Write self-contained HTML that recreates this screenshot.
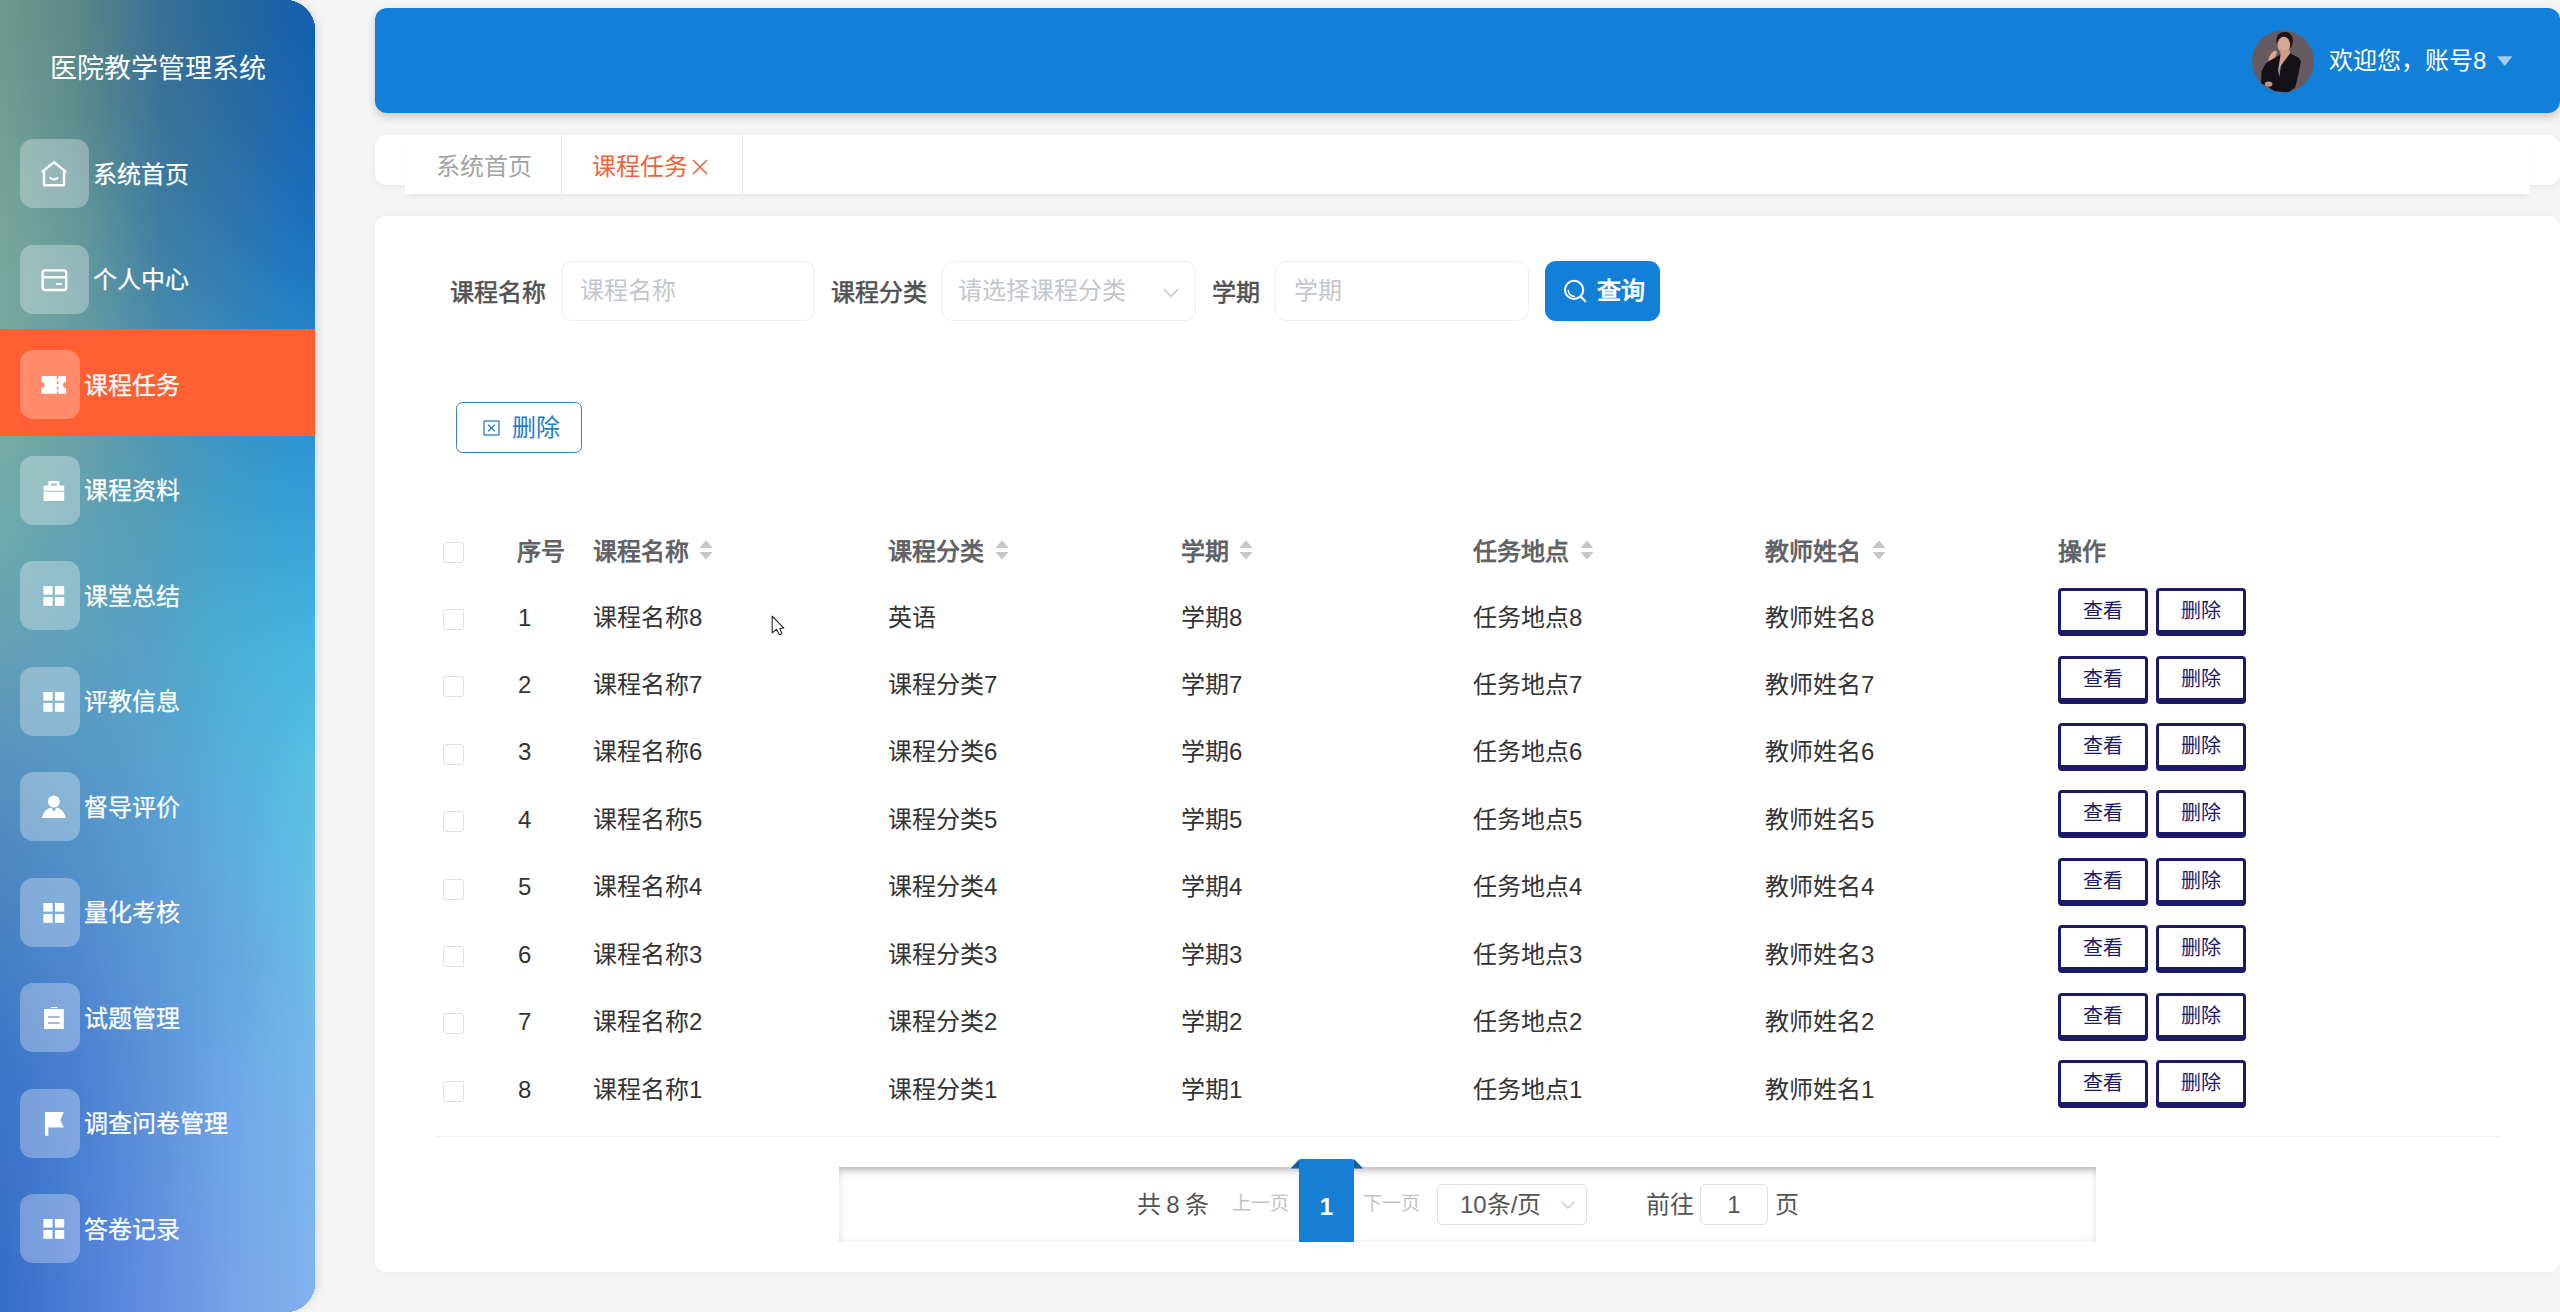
<!DOCTYPE html>
<html lang="zh-CN">
<head>
<meta charset="utf-8">
<title>课程任务</title>
<style>
*{box-sizing:border-box;margin:0;padding:0}
html,body{width:2560px;height:1312px;overflow:hidden;background:#f5f5f5;font-family:"Liberation Sans",sans-serif;}
body{position:relative}
.a{position:absolute;white-space:nowrap}
.t{position:absolute;white-space:nowrap;line-height:1;transform:translateY(-50%)}
/* sidebar */
#sb{left:0;top:0;width:315px;height:1312px;border-radius:0 30px 30px 0;overflow:hidden;box-shadow:3px 0 8px rgba(0,0,0,.10)}
#title{left:0;width:315px;text-align:center;top:68px;font-size:27px;color:#fff}
.ib{position:absolute;left:20px;height:69px;border-radius:13px;background:rgba(255,255,255,.30)}
.mt{font-size:24px;color:#fff;-webkit-text-stroke:.25px #fff}
#act{left:0;top:329px;width:315px;height:107px;background:#ff5f32}
/* header */
#hd{left:375px;top:8px;width:2185px;height:105px;background:#1280d8;border-radius:12px;box-shadow:0 4px 9px rgba(60,50,20,.22)}
/* tabs */
#tbo{left:375px;top:135px;width:2185px;height:50px;background:#fff;border-radius:12px;box-shadow:0 2px 6px rgba(0,0,0,.06)}
#tbi{left:405px;top:135px;width:2125px;height:59px;background:#fff;box-shadow:0 5px 6px -3px rgba(0,0,0,.07)}
.tsep{position:absolute;top:135px;width:1px;height:59px;background:#e6e8ee}
/* card */
#card{left:375px;top:216px;width:2185px;height:1056px;background:#fff;border-radius:12px;box-shadow:0 0 8px rgba(0,0,0,.03)}
.lab{font-size:24px;color:#505050;font-weight:normal;-webkit-text-stroke:.55px #505050}
.inp{position:absolute;top:261px;width:254px;height:60px;border:1px solid #edeef2;border-radius:11px;background:#fff}
.ph{font-size:24px;color:#c3c6ce}
.th{font-size:24px;color:#626366;font-weight:bold}
.td{font-size:24px;color:#333}
.cb{position:absolute;left:443px;width:21px;height:21px;border:1px solid #dfe0e4;border-radius:3px;background:#fff}
.btn{position:absolute;width:90px;height:48px;border:3px solid #1c1968;border-bottom-width:6px;border-radius:4px;background:#fff;color:#1c1968;font-size:20px;text-align:center;line-height:40px}
.srt{position:absolute;width:14px;height:20px}
.sbl{position:absolute;left:0;top:0;width:315px;height:1312px}
#sbL{background:linear-gradient(to bottom,#6e9a8c 17px,#72a092 115px,#78a89a 227px,#76aca6 446px,#6faaae 543px,#66a0b4 649px,#5a93be 755px,#4d88c0 859px,#437ec4 965px,#3c75c6 1073px,#366dc8 1290px)}
#sbQ1{background:linear-gradient(to bottom,#5a8888 17px,#5c8c8e 115px,#64989a 227px,#68a2aa 446px,#60a2b6 543px,#5ea0bc 649px,#5798c6 755px,#5290c8 859px,#5088d0 965px,#4a80d0 1073px,#4c7ed6 1290px);-webkit-mask-image:linear-gradient(to right,rgba(0,0,0,0) 0%,#000 25%);mask-image:linear-gradient(to right,rgba(0,0,0,0) 0%,#000 25%)}
#sbM{background:linear-gradient(to bottom,#3b7094 17px,#3d7496 115px,#3f7ea2 227px,#4f98b4 446px,#52a0bc 543px,#54a2c8 649px,#57a3ce 755px,#5b9cd4 859px,#5c98d8 965px,#5c94d8 1073px,#6690e0 1290px);-webkit-mask-image:linear-gradient(to right,rgba(0,0,0,0) 25%,#000 50%);mask-image:linear-gradient(to right,rgba(0,0,0,0) 25%,#000 50%)}
#sbQ3{background:linear-gradient(to bottom,#22689e 17px,#2a6ca4 115px,#2d76b0 227px,#3a96c8 446px,#42a2d0 543px,#4cb0d6 649px,#56b0da 755px,#5eaee0 859px,#64a8e2 965px,#6ea8ea 1073px,#78a4ea 1290px);-webkit-mask-image:linear-gradient(to right,rgba(0,0,0,0) 50%,#000 75%);mask-image:linear-gradient(to right,rgba(0,0,0,0) 50%,#000 75%)}
#sbR{background:linear-gradient(to bottom,#1560b0 17px,#1766b4 115px,#1a70c0 227px,#2a96d4 446px,#38a5dc 543px,#46b6e2 649px,#55bfe4 755px,#62c0e6 859px,#6cbce8 965px,#76b8ea 1073px,#82b2ee 1290px);-webkit-mask-image:linear-gradient(to right,rgba(0,0,0,0) 75%,#000 100%);mask-image:linear-gradient(to right,rgba(0,0,0,0) 75%,#000 100%)}
</style>
</head>
<body>
<div id="sb" class="a"><div id="sbL" class="sbl"></div><div id="sbQ1" class="sbl"></div><div id="sbM" class="sbl"></div><div id="sbQ3" class="sbl"></div><div id="sbR" class="sbl"></div>
<div id="act" class="a"></div>
<div class="t " style="left:0px;top:69px;width:315px;text-align:center;font-size:27px;color:#fff">医院教学管理系统</div>
<div class="ib" style="top:139.0px;width:69px;"><svg class="a" style="left:19px;top:20px" width="30" height="30" viewBox="0 0 30 30" fill="none" stroke="#fff" stroke-width="2.4" stroke-linejoin="round" stroke-linecap="round"><path d="M3.4 12.6 L15 3.2 L26.6 12.6 M5 11.6 V26.2 H25 V11.6"/><path d="M11.4 19 Q15 22 18.6 19" stroke-width="2.2"/></svg></div>
<div class="t mt" style="left:93px;top:174.5px;">系统首页</div>
<div class="ib" style="top:244.5px;width:69px;"><svg class="a" style="left:20px;top:20px" width="30" height="30" viewBox="0 0 30 30" fill="none" stroke="#fff" stroke-width="2.4" stroke-linejoin="round"><rect x="2.6" y="5.4" width="23.6" height="19.6" rx="2.4"/><path d="M2.6 12.2 H26.2"/><path d="M16.2 19 H22" stroke-width="2"/></svg></div>
<div class="t mt" style="left:93px;top:280.0px;">个人中心</div>
<div class="ib" style="top:350.0px;width:60px;background:rgba(255,255,255,.28);"><svg class="a" style="left:20px;top:25px" width="28" height="20" viewBox="0 0 28 20"><path fill="#fff" d="M1.5 1 H26 V7 A3 3 0 0 0 26 13 V18.8 H1.5 V13 A3 3 0 0 0 1.5 7 Z"/><path d="M17.6 1 V18.8" stroke="#ff8c6e" stroke-width="1.6" stroke-dasharray="3 2.2"/></svg></div>
<div class="t mt" style="left:84px;top:385.5px;">课程任务</div>
<div class="ib" style="top:455.5px;width:60px;"><svg class="a" style="left:22px;top:23px" width="24" height="24" viewBox="0 0 24 24"><path fill="#fff" d="M6.4 6.5 V2 H17.4 V6.5 H22.2 V22 H1.6 V6.5 Z M9 6.5 H14.8 V4.4 H9 Z"/><path d="M1.6 12.3 H22.2" stroke="#9cc3cc" stroke-width="1"/></svg></div>
<div class="t mt" style="left:84px;top:491.0px;">课程资料</div>
<div class="ib" style="top:561.0px;width:60px;"><svg class="a" style="left:23px;top:24px" width="22" height="22" viewBox="0 0 22 22" fill="#fff"><rect x="0.4" y="1" width="9.2" height="8.6"/><rect x="12" y="1" width="9.2" height="8.6"/><rect x="0.4" y="12" width="9.2" height="8.8"/><rect x="12" y="12" width="9.2" height="8.8"/></svg></div>
<div class="t mt" style="left:84px;top:596.5px;">课堂总结</div>
<div class="ib" style="top:666.5px;width:60px;"><svg class="a" style="left:23px;top:24px" width="22" height="22" viewBox="0 0 22 22" fill="#fff"><rect x="0.4" y="1" width="9.2" height="8.6"/><rect x="12" y="1" width="9.2" height="8.6"/><rect x="0.4" y="12" width="9.2" height="8.8"/><rect x="12" y="12" width="9.2" height="8.8"/></svg></div>
<div class="t mt" style="left:84px;top:702.0px;">评教信息</div>
<div class="ib" style="top:772.0px;width:60px;"><svg class="a" style="left:21px;top:22px" width="26" height="26" viewBox="0 0 26 26" fill="#fff"><circle cx="12.9" cy="7.5" r="5.9"/><path d="M0.9 24 C2.4 17.5 6.4 14.4 10.2 13.6 L12.9 17.8 L15.6 13.6 C19.4 14.4 23.4 17.5 24.9 24 Z"/></svg></div>
<div class="t mt" style="left:84px;top:807.5px;">督导评价</div>
<div class="ib" style="top:877.5px;width:60px;"><svg class="a" style="left:23px;top:24px" width="22" height="22" viewBox="0 0 22 22" fill="#fff"><rect x="0.4" y="1" width="9.2" height="8.6"/><rect x="12" y="1" width="9.2" height="8.6"/><rect x="0.4" y="12" width="9.2" height="8.8"/><rect x="12" y="12" width="9.2" height="8.8"/></svg></div>
<div class="t mt" style="left:84px;top:913.0px;">量化考核</div>
<div class="ib" style="top:983.0px;width:60px;"><svg class="a" style="left:23px;top:23px" width="22" height="24" viewBox="0 0 22 24"><path fill="#fff" d="M1.1 3 H7 L8 1 H14 L15 3 H20.8 V23 H1.1 Z"/><path d="M7.4 2.6 H14.6" stroke="#88a8dc" stroke-width="1"/><path d="M5 11 H16.8 M5 17 H16.8" stroke="#8fa0d8" stroke-width="1.3"/></svg></div>
<div class="t mt" style="left:84px;top:1018.5px;">试题管理</div>
<div class="ib" style="top:1088.5px;width:60px;"><svg class="a" style="left:24px;top:22px" width="22" height="26" viewBox="0 0 22 26" fill="#fff"><path d="M1 1 H19.8 L16.4 9.3 L19.8 16.5 H4.4 V24.7 H1 Z"/></svg></div>
<div class="t mt" style="left:84px;top:1124.0px;">调查问卷管理</div>
<div class="ib" style="top:1194.0px;width:60px;"><svg class="a" style="left:23px;top:24px" width="22" height="22" viewBox="0 0 22 22" fill="#fff"><rect x="0.4" y="1" width="9.2" height="8.6"/><rect x="12" y="1" width="9.2" height="8.6"/><rect x="0.4" y="12" width="9.2" height="8.8"/><rect x="12" y="12" width="9.2" height="8.8"/></svg></div>
<div class="t mt" style="left:84px;top:1229.5px;">答卷记录</div>
</div>
<div id="hd" class="a"></div>
<svg class="a" style="left:2250.7px;top:28.5px" width="64" height="64" viewBox="-1 -1 64 64">
<defs><clipPath id="av"><circle cx="31" cy="31.5" r="31"/></clipPath></defs>
<g clip-path="url(#av)">
<rect x="-1" y="-1" width="64" height="64" fill="#675a61"/>
<path d="M24.6 13 C23.6 5.5 27.5 1.8 32.5 1.9 C38.5 2 42 6.5 40.6 13.5 C40 16 39 17.5 38.2 18 L26 17 Z" fill="#1e1519"/>
<ellipse cx="31.8" cy="14.8" rx="6.4" ry="8" fill="#d8a792"/>
<path d="M28.4 20 L37.6 20 L38.2 24.5 L26.6 39.5 L28.2 25 Z" fill="#d09a84"/>
<path d="M16.3 33.5 L16.8 28 L19.5 23 L22.6 20.4 L25.2 22 L23.6 26.2 L22.2 29.2 L21.8 34 Z" fill="#d8a792"/>
<path d="M13.2 34 L17 31 L24 27.2 L28.6 24.6 L26 39.5 L38.2 23.2 L47 28 L49 31.5 L46.2 45 L43.2 57.5 L36 62.5 L22 61 L16 56.5 L9.2 53.5 L9.4 42 Z" fill="#141218"/>
<path d="M26 39.5 L29.6 31 L27.4 47 Z" fill="#cfc6c4" opacity=".7"/>
<ellipse cx="16.6" cy="54" rx="3.8" ry="2.6" fill="#c9947e"/>
</g></svg>
<div class="t " style="left:2329px;top:61px;font-size:24px;color:#fff">欢迎您，账号8</div>
<svg class="a" style="left:2496px;top:55px" width="18" height="12" viewBox="0 0 18 12"><path d="M1 1.2 H16.4 L8.7 11 Z" fill="#a5cdf3"/></svg>
<div id="tbo" class="a"></div><div id="tbi" class="a"></div>
<div class="tsep" style="left:561px"></div><div class="tsep" style="left:742px"></div>
<div class="t " style="left:436px;top:167px;font-size:24px;color:#a4a4a4">系统首页</div>
<div class="t " style="left:592px;top:167px;font-size:24px;color:#f0623a">课程任务</div>
<svg class="a" style="left:691px;top:158px" width="18" height="18" viewBox="0 0 18 18"><path d="M2 2 L16 16 M16 2 L2 16" stroke="#f0623a" stroke-width="1.6" fill="none"/></svg>
<div id="card" class="a"></div>
<div class="t lab" style="left:450px;top:293px;">课程名称</div>
<div class="inp" style="left:561px"></div>
<div class="t ph" style="left:580px;top:291px;">课程名称</div>
<div class="t lab" style="left:831px;top:293px;">课程分类</div>
<div class="inp" style="left:942px"></div>
<div class="t ph" style="left:958px;top:291px;">请选择课程分类</div>
<svg class="a" style="left:1162px;top:287px" width="18" height="12" viewBox="0 0 18 12"><path d="M2 2 L9 9.4 L16 2" stroke="#c3c6ce" stroke-width="1.5" fill="none"/></svg>
<div class="t lab" style="left:1212px;top:293px;">学期</div>
<div class="inp" style="left:1275px"></div>
<div class="t ph" style="left:1294px;top:291px;">学期</div>
<div class="a" style="left:1545px;top:261px;width:115px;height:60px;background:#1280d8;border-radius:11px"></div>
<svg class="a" style="left:1560px;top:275px" width="30" height="30" viewBox="0 0 30 30" fill="none" stroke="#fff" stroke-linecap="round"><circle cx="14.1" cy="14.9" r="9.1" stroke-width="2.1"/><path d="M20.7 21.5 L25.2 26.2" stroke-width="2.1"/><path d="M8.3 15.4 A6.2 6.2 0 0 0 14.4 21.4" stroke-width="1.5"/></svg>
<div class="t " style="left:1597px;top:291px;font-size:24px;color:#fff;font-weight:bold">查询</div>
<div class="a" style="left:456px;top:402px;width:126px;height:51px;border:1px solid #3b80ba;border-radius:6.5px;background:#fff"></div>
<svg class="a" style="left:483px;top:420px" width="17" height="16" viewBox="0 0 17 16" fill="none" stroke="#2b82c4" stroke-width="1.3"><rect x="1" y="1" width="15" height="14"/><path d="M5.2 4.8 L11.8 11.2 M11.8 4.8 L5.2 11.2"/></svg>
<div class="t " style="left:512px;top:428px;font-size:24px;color:#1b7cc8">删除</div>
<div class="cb" style="top:542.3px"></div>
<div class="t th" style="left:517px;top:552px;">序号</div>
<div class="t th" style="left:593px;top:552px;">课程名称</div>
<svg class="srt" style="left:699px;top:540px" viewBox="0 0 14 20"><path d="M0.4 8 L7 0.6 L13.6 8 Z M0.4 12 L7 19.4 L13.6 12 Z" fill="#c4c6ca"/></svg>
<div class="t th" style="left:888px;top:552px;">课程分类</div>
<svg class="srt" style="left:995px;top:540px" viewBox="0 0 14 20"><path d="M0.4 8 L7 0.6 L13.6 8 Z M0.4 12 L7 19.4 L13.6 12 Z" fill="#c4c6ca"/></svg>
<div class="t th" style="left:1181px;top:552px;">学期</div>
<svg class="srt" style="left:1239px;top:540px" viewBox="0 0 14 20"><path d="M0.4 8 L7 0.6 L13.6 8 Z M0.4 12 L7 19.4 L13.6 12 Z" fill="#c4c6ca"/></svg>
<div class="t th" style="left:1473px;top:552px;">任务地点</div>
<svg class="srt" style="left:1580px;top:540px" viewBox="0 0 14 20"><path d="M0.4 8 L7 0.6 L13.6 8 Z M0.4 12 L7 19.4 L13.6 12 Z" fill="#c4c6ca"/></svg>
<div class="t th" style="left:1765px;top:552px;">教师姓名</div>
<svg class="srt" style="left:1872px;top:540px" viewBox="0 0 14 20"><path d="M0.4 8 L7 0.6 L13.6 8 Z M0.4 12 L7 19.4 L13.6 12 Z" fill="#c4c6ca"/></svg>
<div class="t th" style="left:2058px;top:552px;">操作</div>
<div class="cb" style="top:608.7px"></div>
<div class="t td" style="left:518px;top:617.5px;">1</div>
<div class="t td" style="left:593px;top:617.5px;">课程名称8</div>
<div class="t td" style="left:888px;top:617.5px;">英语</div>
<div class="t td" style="left:1181px;top:617.5px;">学期8</div>
<div class="t td" style="left:1473px;top:617.5px;">任务地点8</div>
<div class="t td" style="left:1765px;top:617.5px;">教师姓名8</div>
<div class="btn" style="left:2058px;top:588.0px">查看</div><div class="btn" style="left:2156px;top:588.0px">删除</div>
<div class="cb" style="top:676.2px"></div>
<div class="t td" style="left:518px;top:685.0px;">2</div>
<div class="t td" style="left:593px;top:685.0px;">课程名称7</div>
<div class="t td" style="left:888px;top:685.0px;">课程分类7</div>
<div class="t td" style="left:1181px;top:685.0px;">学期7</div>
<div class="t td" style="left:1473px;top:685.0px;">任务地点7</div>
<div class="t td" style="left:1765px;top:685.0px;">教师姓名7</div>
<div class="btn" style="left:2058px;top:655.5px">查看</div><div class="btn" style="left:2156px;top:655.5px">删除</div>
<div class="cb" style="top:743.6px"></div>
<div class="t td" style="left:518px;top:752.4px;">3</div>
<div class="t td" style="left:593px;top:752.4px;">课程名称6</div>
<div class="t td" style="left:888px;top:752.4px;">课程分类6</div>
<div class="t td" style="left:1181px;top:752.4px;">学期6</div>
<div class="t td" style="left:1473px;top:752.4px;">任务地点6</div>
<div class="t td" style="left:1765px;top:752.4px;">教师姓名6</div>
<div class="btn" style="left:2058px;top:722.9px">查看</div><div class="btn" style="left:2156px;top:722.9px">删除</div>
<div class="cb" style="top:811.1px"></div>
<div class="t td" style="left:518px;top:819.9px;">4</div>
<div class="t td" style="left:593px;top:819.9px;">课程名称5</div>
<div class="t td" style="left:888px;top:819.9px;">课程分类5</div>
<div class="t td" style="left:1181px;top:819.9px;">学期5</div>
<div class="t td" style="left:1473px;top:819.9px;">任务地点5</div>
<div class="t td" style="left:1765px;top:819.9px;">教师姓名5</div>
<div class="btn" style="left:2058px;top:790.4px">查看</div><div class="btn" style="left:2156px;top:790.4px">删除</div>
<div class="cb" style="top:878.5px"></div>
<div class="t td" style="left:518px;top:887.3px;">5</div>
<div class="t td" style="left:593px;top:887.3px;">课程名称4</div>
<div class="t td" style="left:888px;top:887.3px;">课程分类4</div>
<div class="t td" style="left:1181px;top:887.3px;">学期4</div>
<div class="t td" style="left:1473px;top:887.3px;">任务地点4</div>
<div class="t td" style="left:1765px;top:887.3px;">教师姓名4</div>
<div class="btn" style="left:2058px;top:857.8px">查看</div><div class="btn" style="left:2156px;top:857.8px">删除</div>
<div class="cb" style="top:946.0px"></div>
<div class="t td" style="left:518px;top:954.8px;">6</div>
<div class="t td" style="left:593px;top:954.8px;">课程名称3</div>
<div class="t td" style="left:888px;top:954.8px;">课程分类3</div>
<div class="t td" style="left:1181px;top:954.8px;">学期3</div>
<div class="t td" style="left:1473px;top:954.8px;">任务地点3</div>
<div class="t td" style="left:1765px;top:954.8px;">教师姓名3</div>
<div class="btn" style="left:2058px;top:925.2px">查看</div><div class="btn" style="left:2156px;top:925.2px">删除</div>
<div class="cb" style="top:1013.4px"></div>
<div class="t td" style="left:518px;top:1022.2px;">7</div>
<div class="t td" style="left:593px;top:1022.2px;">课程名称2</div>
<div class="t td" style="left:888px;top:1022.2px;">课程分类2</div>
<div class="t td" style="left:1181px;top:1022.2px;">学期2</div>
<div class="t td" style="left:1473px;top:1022.2px;">任务地点2</div>
<div class="t td" style="left:1765px;top:1022.2px;">教师姓名2</div>
<div class="btn" style="left:2058px;top:992.7px">查看</div><div class="btn" style="left:2156px;top:992.7px">删除</div>
<div class="cb" style="top:1080.9px"></div>
<div class="t td" style="left:518px;top:1089.7px;">8</div>
<div class="t td" style="left:593px;top:1089.7px;">课程名称1</div>
<div class="t td" style="left:888px;top:1089.7px;">课程分类1</div>
<div class="t td" style="left:1181px;top:1089.7px;">学期1</div>
<div class="t td" style="left:1473px;top:1089.7px;">任务地点1</div>
<div class="t td" style="left:1765px;top:1089.7px;">教师姓名1</div>
<div class="btn" style="left:2058px;top:1060.2px">查看</div><div class="btn" style="left:2156px;top:1060.2px">删除</div>
<div class="a" style="left:435px;top:1136px;width:2065px;height:1px;background:#eeeff2"></div>
<div class="a" style="left:839px;top:1167px;width:1257px;height:75px;background:#fff;box-shadow:inset 0 8px 8px -5px rgba(0,0,0,.26),inset 0 0 9px rgba(0,0,0,.09)"></div>
<svg class="a" style="left:1290px;top:1158px" width="74" height="12" viewBox="0 0 74 12"><path d="M0.4 10.5 L9.6 1 V10.5 Z M73.2 10.5 L64 1 V10.5 Z" fill="#0e5fa9"/></svg>
<div class="a" style="left:1299px;top:1159px;width:55px;height:83px;background:#177fd3;border-radius:2px 2px 0 0"></div>
<div class="t " style="left:1299px;top:1207px;width:55px;text-align:center;font-size:24px;color:#fff;font-weight:bold">1</div>
<div class="t " style="left:1137px;top:1205px;font-size:24px;color:#555;word-spacing:-1px;letter-spacing:-.2px">共 8 条</div>
<div class="t " style="left:1232px;top:1203px;font-size:19px;color:#c2c3c6">上一页</div>
<div class="t " style="left:1363px;top:1203px;font-size:19px;color:#c2c3c6">下一页</div>
<div class="a" style="left:1437px;top:1184px;width:150px;height:41px;border:1px solid #dcdfe6;border-radius:5px;background:#fff"></div>
<div class="t " style="left:1460px;top:1205px;font-size:24px;color:#555">10条/页</div>
<svg class="a" style="left:1560px;top:1200px" width="16" height="10" viewBox="0 0 16 10"><path d="M2 2 L8 8 L14 2" stroke="#c0c4cc" stroke-width="1.4" fill="none"/></svg>
<div class="t " style="left:1646px;top:1205px;font-size:24px;color:#555">前往</div>
<div class="a" style="left:1700px;top:1184px;width:68px;height:41px;border:1px solid #dcdfe6;border-radius:5px;background:#fff"></div>
<div class="t " style="left:1700px;top:1205px;width:68px;text-align:center;font-size:24px;color:#555">1</div>
<div class="t " style="left:1775px;top:1205px;font-size:24px;color:#555">页</div>
<svg class="a" style="left:770px;top:614px" width="16" height="23" viewBox="0 0 16 23"><path d="M2.2 2.1 V18.8 L6.5 15.4 L9.3 20.4 Q10.6 21.2 11.7 19.4 L9.9 14.5 L13.8 14.1 Z" fill="#fff" stroke="#1a1a1a" stroke-width="1.05" stroke-linejoin="round"/></svg>
</body>
</html>
